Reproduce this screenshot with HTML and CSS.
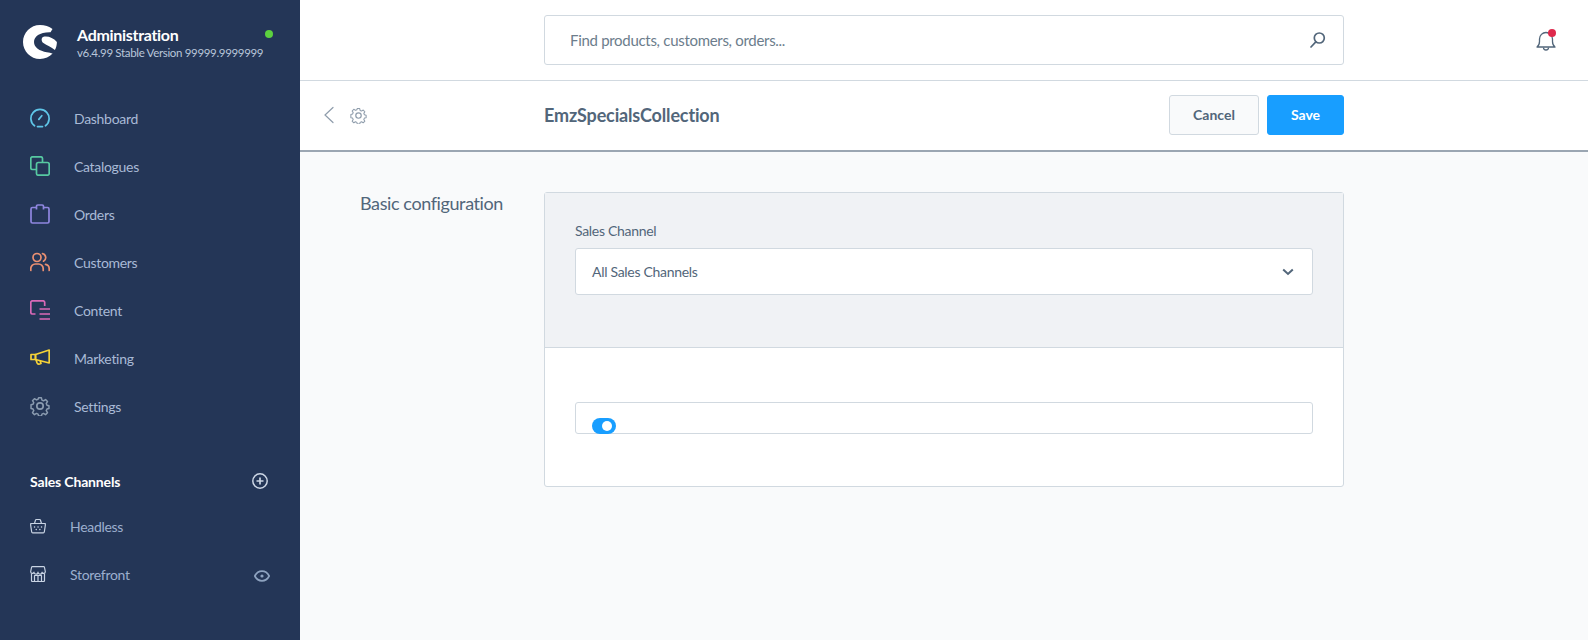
FILE: index.html
```html
<!DOCTYPE html>
<html lang="en">
<head>
<meta charset="utf-8">
<title>EmzSpecialsCollection | Settings | Administration</title>
<link rel="stylesheet" href="styles.css">
</head>
<body>
<aside class="sidebar">
  <div class="brand">
    <svg class="logo" viewBox="0 0 34 34"><path fill="#fff" d="M17 0C7.600 0 0 7.600 0 17s7.600 17 17 17c5 0 9.500-2.100 12.600-5.500-1.500-.6-3.500-.9-5.800-1.300C16.500 26 11 22.500 11 17c0-5.500 6-10 16.500-9.700L29.500 4C26.200 1.500 21.800 0 17 0z"/><path fill="#fff" d="M20 12c4.500-1.300 10 .6 13.900 5 0 2.800-.7 5.600-2 8-3.600-3-8-4.700-11.500-7-1.900-1.300-2.500-4.800-.4-6z"/></svg>
    <div class="brand-text">
      <div class="brand-title">Administration</div>
      <div class="brand-version">v6.4.99 Stable Version 99999.9999999</div>
    </div>
    <span class="status-dot"></span>
  </div>

  <nav class="nav">
    <a class="nav-item">
      <svg class="nav-icon" viewBox="0 0 20 20" fill="none" stroke="#5fc6e8" stroke-width="1.700" stroke-linecap="round" stroke-linejoin="round"><path d="M4.500 17.800A9.100 9.100 0 1 1 15.500 17.800"/><path d="M7.500 18.600h5"/><path d="M8.800 11.400l3-3.700"/></svg>
      <span>Dashboard</span>
    </a>
    <a class="nav-item">
      <svg class="nav-icon" viewBox="0 0 20 20" fill="none" stroke="#57c9a2" stroke-width="1.700" stroke-linejoin="round"><path d="M6.500 13.500H2.500A1.700 1.700 0 0 1 .8 11.800V2.500A1.700 1.700 0 0 1 2.500.8h8.300a1.700 1.700 0 0 1 1.700 1.700v4"/><rect x="6.500" y="6.500" width="12.700" height="12.700" rx="1.800"/></svg>
      <span>Catalogues</span>
    </a>
    <a class="nav-item">
      <svg class="nav-icon" viewBox="0 0 20 20" fill="none" stroke="#8f86e0" stroke-width="1.700" stroke-linejoin="round"><path d="M6.500 3.500H2.500A1.500 1.500 0 0 0 1 5v12.500A1.500 1.500 0 0 0 2.500 19h15a1.500 1.500 0 0 0 1.500-1.500V5a1.500 1.500 0 0 0-1.500-1.500h-4"/><path d="M6.500 5.500V2.300A1.300 1.300 0 0 1 7.800 1h4.400a1.300 1.300 0 0 1 1.300 1.300v3.200"/></svg>
      <span>Orders</span>
    </a>
    <a class="nav-item">
      <svg class="nav-icon" viewBox="0 0 20 20" fill="none" stroke="#ea9072" stroke-width="1.700" stroke-linecap="round"><circle cx="7" cy="5.500" r="4"/><path d="M.8 18.500v-2a4.500 4.500 0 0 1 4.500-4.500h3.400a4.500 4.500 0 0 1 4.500 4.500v2"/><path d="M12.500 1.700a4 4 0 0 1 1 7.500"/><path d="M15.500 12.400a4.500 4.500 0 0 1 3.700 4.200v1.900"/></svg>
      <span>Customers</span>
    </a>
    <a class="nav-item">
      <svg class="nav-icon" viewBox="0 0 20 20" fill="none" stroke="#d969b8" stroke-width="1.700" stroke-linecap="butt"><path d="M5.500 14H2.500A1.700 1.700 0 0 1 .8 12.300V2.500A1.700 1.700 0 0 1 2.500.8H13a1.700 1.700 0 0 1 1.700 1.700V6"/><path d="M9.500 9h10.500M9.500 14h10.500M9.500 19h10.500"/></svg>
      <span>Content</span>
    </a>
    <a class="nav-item">
      <svg class="nav-icon" viewBox="0 0 20 20" fill="none" stroke="#f6d338" stroke-width="1.700" stroke-linejoin="round"><path d="M5.500 6.500L19.200 2v13L5.500 11.500z"/><path d="M5.500 6.500H1v5h4.500z"/><path d="M6 11.500l1 3.300a2 2 0 0 0 2.500 1.200l1.500-.5-.9-2.900"/></svg>
      <span>Marketing</span>
    </a>
    <a class="nav-item">
      <svg class="nav-icon" viewBox="0 0 20 20" fill="none" stroke="#8a9bb0" stroke-width="1.700" stroke-linejoin="round"><circle cx="10" cy="10" r="3.200"/><path d="M8.400.8h3.200l.6 2.600 1.800.8 2.300-1.400 2.200 2.300-1.400 2.200.8 1.900 2.300.6v3.200l-2.300.6-.8 1.800 1.400 2.300-2.200 2.200-2.300-1.400-1.800.8-.6 2.300H8.400l-.6-2.300-1.800-.8-2.300 1.400-2.200-2.200 1.400-2.300-.8-1.800-2.300-.6V8.800l2.300-.6.800-1.900-1.400-2.200 2.200-2.300L6 3.200l1.800-.8z" transform="translate(1.200 1.100) scale(.88)"/></svg>
      <span>Settings</span>
    </a>
  </nav>

  <div class="channels-head">
    <span>Sales Channels</span>
    <svg class="plus-icon" viewBox="0 0 16 16" fill="none" stroke="#cdd7e6" stroke-width="1.500"><circle cx="8" cy="8" r="7.200"/><path d="M8 4.500v7M4.500 8h7" stroke-width="1.700"/></svg>
  </div>
  <a class="channel-item">
    <svg class="channel-icon" viewBox="0 0 16 16" fill="none" stroke="#c9d4e4" stroke-width="1.200" stroke-linejoin="round" stroke-linecap="round"><path d="M.7 5.500h14.600v2l-1 6.500a1 1 0 0 1-1 .8H2.700a1 1 0 0 1-1-.8l-1-6.500z"/><path d="M4.500 5.500l1-3.300a1 1 0 0 1 1-.7h3a1 1 0 0 1 1 .7l1 3.300"/><path d="M4.500 9h.1M8 9h.1M11.500 9h.1M6.200 11.500h.1M9.800 11.500h.1" stroke-width="1.400"/></svg>
    <span>Headless</span>
  </a>
  <a class="channel-item">
    <svg class="channel-icon" viewBox="0 0 16 16" fill="none" stroke="#c9d4e4" stroke-width="1.200" stroke-linejoin="round"><path d="M1.500 7.500v7a1 1 0 0 0 1 1h11a1 1 0 0 0 1-1v-7"/><path d="M2.500.7h11a1 1 0 0 1 1 .8l.8 4a1.700 1.700 0 0 1-3.300.7 2 2 0 0 1-4 0 2 2 0 0 1-4 0A1.700 1.700 0 0 1 .7 5.500l.8-4a1 1 0 0 1 1-.8z"/><path d="M4.500 15.500V9.500h7v6M8 9.500v6"/></svg>
    <span>Storefront</span>
    <svg class="eye-icon" viewBox="0 0 16 12" fill="none" stroke="#8ea3c0" stroke-width="1.700"><path d="M.8 6C2.500 2.800 5 1.200 8 1.200s5.500 1.600 7.200 4.800c-1.700 3.200-4.200 4.800-7.200 4.800S2.500 9.200.8 6z"/><circle cx="8" cy="6" r="1.600" fill="#8ea3c0" stroke="none"/></svg>
  </a>
</aside>

<div class="main">
  <header class="topbar">
    <div class="search">
      <span>Find products, customers, orders...</span>
      <svg class="search-icon" viewBox="0 0 16 16" fill="none" stroke="#52667a" stroke-width="1.700" stroke-linecap="round"><circle cx="9.300" cy="6" r="5"/><path d="M5.800 9.800L1 15"/></svg>
    </div>
    <div class="bell">
      <svg class="bell-icon" viewBox="0 0 20 20" fill="none" stroke="#52667a" stroke-width="1.300" stroke-linejoin="round"><path d="M1 16c1.800-1.300 2.500-3 2.500-5.500V8a6.500 6.500 0 0 1 13 0v2.500c0 2.500.7 4.200 2.500 5.500z"/><path d="M7.500 16.500a2.500 2.500 0 0 0 5 0"/></svg>
      <span class="bell-dot"></span>
    </div>
  </header>

  <div class="smartbar">
    <div class="smartbar-nav">
      <svg class="back-icon" viewBox="0 0 12 18" fill="none" stroke="#8e9cab" stroke-width="1.200" stroke-linecap="round"><path d="M10 1.500L2 9l8 7.500"/></svg>
      <svg class="cog-icon" viewBox="0 0 20 20" fill="none" stroke="#8e9cab" stroke-width="1.400" stroke-linejoin="round"><circle cx="10" cy="10" r="3.200"/><path d="M8.400.8h3.200l.6 2.600 1.800.8 2.300-1.400 2.200 2.300-1.400 2.200.8 1.900 2.300.6v3.200l-2.300.6-.8 1.800 1.400 2.300-2.200 2.200-2.300-1.400-1.800.8-.6 2.300H8.400l-.6-2.300-1.800-.8-2.300 1.400-2.200-2.200 1.400-2.300-.8-1.800-2.300-.6V8.800l2.300-.6.800-1.900-1.400-2.200 2.200-2.300L6 3.200l1.800-.8z" transform="translate(1.200 1.100) scale(.88)"/></svg>
    </div>
    <div class="smartbar-body">
      <h1 class="smartbar-title">EmzSpecialsCollection</h1>
      <div class="actions">
        <button class="btn">Cancel</button>
        <button class="btn btn-primary">Save</button>
      </div>
    </div>
  </div>

  <div class="content">
    <h2 class="section-label">Basic configuration</h2>
    <div class="card">
      <div class="card-toolbar">
        <div class="field-label">Sales Channel</div>
        <div class="select">
          <span>All Sales Channels</span>
          <svg class="chevron" viewBox="0 0 12 8" fill="none" stroke="#52667a" stroke-width="2"><path d="M1.200 1.500L6 6l4.800-4.500"/></svg>
        </div>
      </div>
      <div class="card-body">
        <div class="switch-box">
          <span class="switch"></span>
        </div>
      </div>
    </div>
  </div>
</div>
</body>
</html>
```

FILE: styles.css
```css
* {
    box-sizing: border-box;
}
html, body {
    height: 100%;
}
body {
    margin: 0;
    display: flex;
    overflow: hidden;
    background: #fff;
    color: #52667a;
    font-family: Lato, "Noto Sans", sans-serif;
    font-size: 14px;
    letter-spacing: -0.3px;
}

/* sidebar */
.sidebar {
    width: 300px;
    flex: none;
    background: #243657;
}
.brand {
    height: 94px;
    display: flex;
    padding: 25px 0 0 23px;
    position: relative;
}
.logo {
    width: 34px;
    height: 34px;
}
.brand-text {
    margin-left: 20px;
}
.brand-title {
    color: #fff;
    font-size: 16px;
    font-weight: 700;
    line-height: 20px;
}
.brand-version {
    color: #b9c6da;
    font-size: 11.500px;
    letter-spacing: -0.33px;
    line-height: 14px;
    margin-top: 1px;
}
.status-dot {
    position: absolute;
    left: 265px;
    top: 30px;
    width: 8px;
    height: 8px;
    border-radius: 50%;
    background: #5cd13f;
}
.nav-item {
    height: 48px;
    display: flex;
    align-items: center;
    padding-left: 30px;
    color: #a9bad6;
}
.nav-icon {
    width: 20px;
    height: 20px;
    margin-right: 24px;
}
.channels-head {
    margin-top: 27px;
    height: 45px;
    padding: 3px 32px 0 30px;
    display: flex;
    align-items: center;
    justify-content: space-between;
    color: #fff;
    font-weight: 700;
    letter-spacing: -0.15px;
}
.plus-icon {
    width: 16px;
    height: 16px;
}
.channel-item {
    height: 48px;
    display: flex;
    align-items: center;
    padding-left: 30px;
    color: #9cafce;
}
.channel-icon {
    width: 16px;
    height: 16px;
    margin-right: 24px;
}
.eye-icon {
    width: 16px;
    height: 12px;
    margin-left: auto;
    margin-right: 30px;
    margin-top: 4px;
}

/* main column */
.main {
    width: 1288px;
    flex: none;
    background: #f9fafb;
}
.topbar {
    height: 81px;
    background: #fff;
    border-bottom: 1px solid #d1d9e0;
    padding: 15px 0 0 244px;
    display: flex;
}
.search {
    width: 800px;
    height: 50px;
    border: 1px solid #d1d9e0;
    border-radius: 3px;
    display: flex;
    align-items: center;
    justify-content: space-between;
    padding: 0 17px 0 25px;
    font-size: 15px;
    color: #6c7d8c;
}
.search-icon {
    width: 16px;
    height: 16px;
}
.bell {
    position: relative;
    margin: 16px 0 0 192px;
    width: 20px;
    height: 20px;
}
.bell-icon {
    width: 20px;
    height: 20px;
    display: block;
}
.bell-dot {
    position: absolute;
    top: -2px;
    right: 0;
    width: 8px;
    height: 8px;
    border-radius: 50%;
    background: #de294c;
}

.smartbar {
    height: 71px;
    background: #fff;
    border-bottom: 2px solid #9ba6b2;
    display: flex;
}
.smartbar-nav {
    width: 244px;
    display: flex;
    align-items: center;
    padding: 0 0 1px 23px;
}
.back-icon {
    width: 12px;
    height: 18px;
}
.cog-icon {
    width: 17px;
    height: 17px;
    margin-left: 15px;
}
.smartbar-body {
    width: 800px;
    display: flex;
    align-items: center;
    justify-content: space-between;
    padding-bottom: 2px;
}
.smartbar-title {
    margin: 0;
    font-size: 18px;
    font-weight: 700;
    letter-spacing: -0.15px;
    color: #52667a;
}
.actions {
    display: flex;
    gap: 8px;
}
.btn {
    height: 40px;
    width: 90px;
    border: 1px solid #d1d9e0;
    border-radius: 3px;
    background: #f9fafb;
    color: #52667a;
    font-family: inherit;
    font-size: 14px;
    font-weight: 700;
}
.btn-primary {
    width: 77px;
    border-color: #189eff;
    background: #189eff;
    color: #fff;
}

.content {
    display: flex;
    padding-top: 40px;
}
.section-label {
    width: 244px;
    margin: 0;
    padding-left: 60px;
    font-size: 18px;
    font-weight: 400;
    letter-spacing: -0.4px;
    line-height: 22px;
    color: #52667a;
    white-space: nowrap;
}
.card {
    width: 800px;
    height: 295px;
    background: #fff;
    border: 1px solid #d1d9e0;
    border-radius: 3px;
}
.card-toolbar {
    height: 155px;
    background: #f0f2f5;
    border-bottom: 1px solid #d1d9e0;
    padding: 29px 30px 0;
}
.field-label {
    font-size: 14px;
    line-height: 18px;
    margin-bottom: 8px;
}
.select {
    height: 47px;
    background: #fff;
    border: 1px solid #d1d9e0;
    border-radius: 3px;
    display: flex;
    align-items: center;
    justify-content: space-between;
    padding: 0 18px 0 16px;
}
.chevron {
    width: 12px;
    height: 8px;
}
.card-body {
    padding: 54px 30px 0;
}
.switch-box {
    height: 32px;
    border: 1px solid #d1d9e0;
    border-radius: 3px;
    padding: 15px 0 0 16px;
}
.switch {
    display: block;
    position: relative;
    width: 24px;
    height: 16px;
    border-radius: 8px;
    background: #189eff;
}
.switch::after {
    content: "";
    position: absolute;
    top: 3px;
    right: 4px;
    width: 10px;
    height: 10px;
    border-radius: 50%;
    background: #fff;
}
```
